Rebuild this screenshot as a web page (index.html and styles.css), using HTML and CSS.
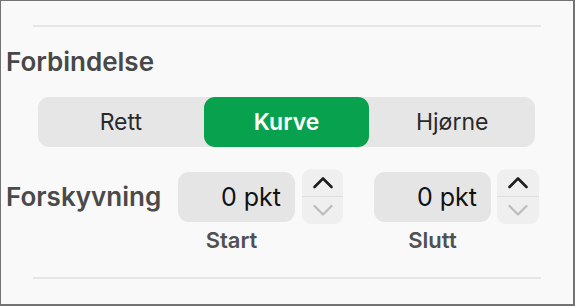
FILE: index.html
```html
<!DOCTYPE html>
<html lang="no">
<head>
<meta charset="utf-8">
<link rel="stylesheet" href="styles.css">
</head>
<body>
<div class="panel">
  <div class="rule"></div>
  <h2 class="title">Forbindelse</h2>
  <div class="segmented">
    <div class="seg">Rett</div>
    <div class="seg active">Kurve</div>
    <div class="seg">Hjørne</div>
  </div>
  <div class="row">
    <div class="row-label">Forskyvning</div>
    <div class="spin first">
      <div class="spin-main">
        <div class="field">0 pkt</div>
        <div class="caption">Start</div>
      </div>
      <div class="stepper">
        <div class="step up">
          <svg width="22" height="13" viewBox="0 0 22 13"><path d="M2.5 11 L11 2.5 L19.5 11" fill="none" stroke="#1e1e1e" stroke-width="2.6" stroke-linecap="round" stroke-linejoin="round"/></svg>
        </div>
        <div class="step-div"></div>
        <div class="step down">
          <svg width="22" height="13" viewBox="0 0 22 13"><path d="M2.5 2 L11 10.5 L19.5 2" fill="none" stroke="#bcbcbc" stroke-width="2.2" stroke-linecap="round" stroke-linejoin="round"/></svg>
        </div>
      </div>
    </div>
    <div class="spin second">
      <div class="spin-main">
        <div class="field">0 pkt</div>
        <div class="caption">Slutt</div>
      </div>
      <div class="stepper">
        <div class="step up">
          <svg width="22" height="13" viewBox="0 0 22 13"><path d="M2.5 11 L11 2.5 L19.5 11" fill="none" stroke="#1e1e1e" stroke-width="2.6" stroke-linecap="round" stroke-linejoin="round"/></svg>
        </div>
        <div class="step-div"></div>
        <div class="step down">
          <svg width="22" height="13" viewBox="0 0 22 13"><path d="M2.5 2 L11 10.5 L19.5 2" fill="none" stroke="#bcbcbc" stroke-width="2.2" stroke-linecap="round" stroke-linejoin="round"/></svg>
        </div>
      </div>
    </div>
  </div>
  <div class="rule bottom"></div>
</div>
</body>
</html>
```
FILE: styles.css
```css
* { box-sizing: border-box; }
html, body { margin: 0; padding: 0; }
body {
  font-family: Inter, "Noto Sans", sans-serif;
  background: #f9f9f9;
}
.panel {
  width: 575px;
  height: 306px;
  border-style: solid;
  border-color: #737373;
  border-width: 1px 2px 2px 1px;
  background: #f9f9f9;
  overflow: hidden;
}
.rule {
  height: 2px;
  margin: 24px 32px 0 32px;
  background: #e6e6e6;
}
.rule.bottom {
  margin-top: 23px;
}
.title {
  margin: 20px 0 0 0;
  padding-left: 5px;
  font-size: 26px;
  line-height: 30px;
  font-weight: 600;
  color: #484848;
}
.segmented {
  display: flex;
  margin: 20px 0 0 37px;
  width: 497px;
  height: 50px;
  background: #e6e6e6;
  border-radius: 11px;
}
.seg {
  flex: 1;
  display: flex;
  align-items: center;
  justify-content: center;
  font-size: 23px;
  color: #2a2a2a;
  border-radius: 11px;
}
.seg.active {
  background: #08a14e;
  color: #ffffff;
  font-weight: 600;
}
.row {
  display: flex;
  align-items: flex-start;
  margin-top: 22px;
}
.row-label {
  width: 177px;
  padding-left: 5px;
  height: 55px;
  display: flex;
  align-items: center;
  font-size: 26px;
  font-weight: 600;
  color: #4a4a4a;
}
.spin {
  display: flex;
  align-items: flex-start;
  gap: 7px;
}
.spin.second {
  margin-left: 31px;
  gap: 6px;
}
.spin-main {
  display: flex;
  flex-direction: column;
  align-items: center;
  padding-top: 3px;
}
.field {
  width: 117px;
  height: 50px;
  border-radius: 11px;
  background: #e5e5e5;
  display: flex;
  align-items: center;
  justify-content: flex-end;
  padding-right: 14px;
  font-size: 25px;
  color: #111111;
}
.caption {
  margin-top: 5px;
  font-size: 22px;
  line-height: 27px;
  font-weight: 600;
  color: #505050;
}
.spin.first .caption { margin-right: 10px; }
.stepper {
  width: 41px;
  height: 55px;
  border-radius: 9px;
  background: #efefef;
  display: flex;
  flex-direction: column;
  align-items: center;
}
.spin.second .stepper { width: 42px; }
.step {
  flex: 1;
  display: flex;
  align-items: center;
  justify-content: center;
}
.step-div {
  width: 100%;
  height: 1px;
  background: #dedede;
}
```
